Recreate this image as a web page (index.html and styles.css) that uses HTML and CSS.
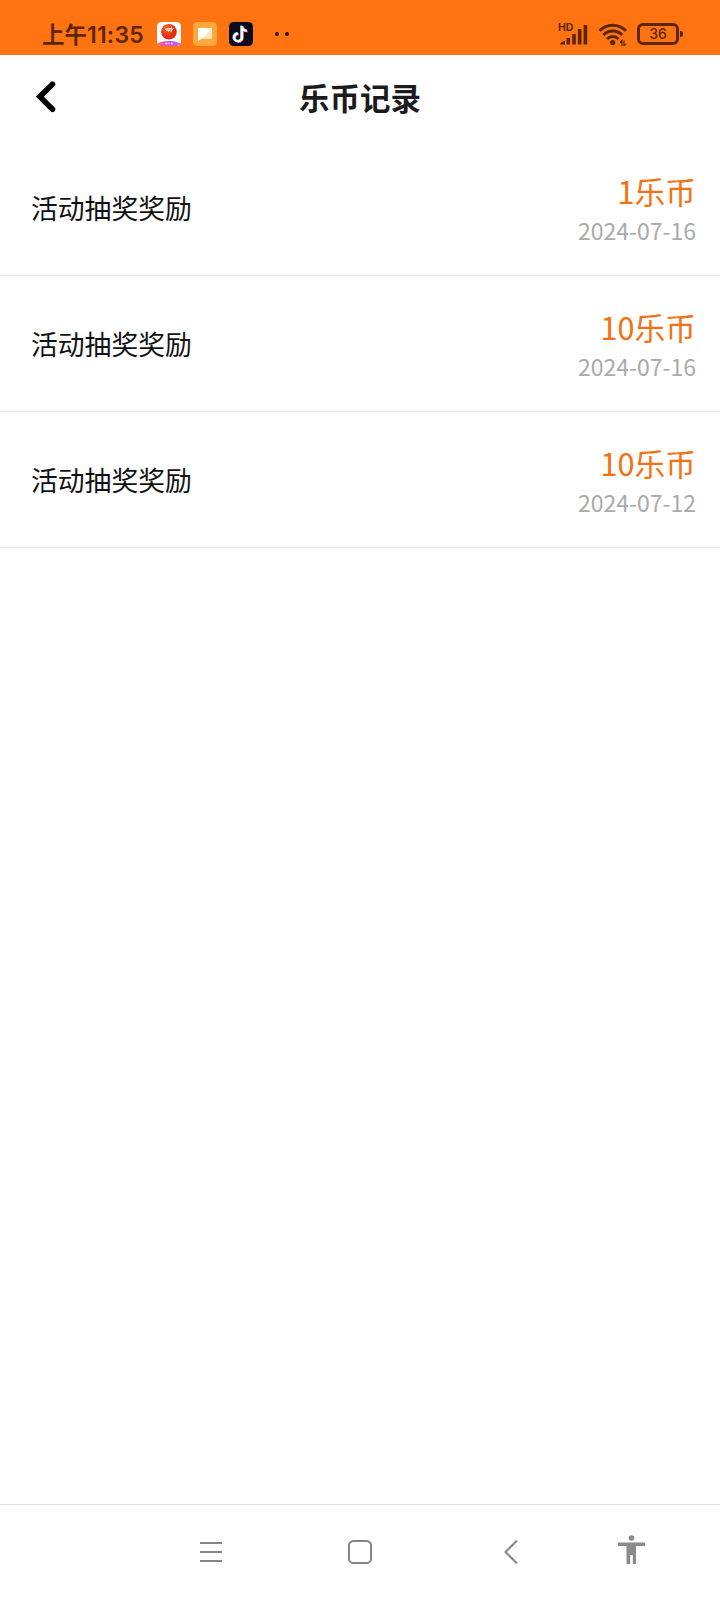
FILE: index.html
```
<!DOCTYPE html>
<html lang="zh-CN">

<head>
    <meta charset="UTF-8" />
    <meta name="viewport" content="width=device-width, initial-scale=1.0" />
    <title>乐币记录</title>
    <link rel="stylesheet" href="styles.css">
</head>

<body>
    <div class="status-bar">
        <div class="status-left">
            <span class="time">上午<span class="clock">11:35</span></span>
            <svg class="app-icon" width="24" height="24" viewBox="0 0 24 24">
                <defs>
                    <clipPath id="appClip"><rect width="24" height="24" rx="4.5" /></clipPath>
                    <linearGradient id="appBand"><stop offset="0" stop-color="#ff6a5a" /><stop offset=".45" stop-color="#d44de0" /><stop offset="1" stop-color="#c66cf2" /></linearGradient>
                    <radialGradient id="appBall" cx=".4" cy=".3"><stop offset="0" stop-color="#ff6a20" /><stop offset="1" stop-color="#e62c10" /></radialGradient>
                </defs>
                <g clip-path="url(#appClip)">
                    <rect width="24" height="24" fill="#fff" />
                    <ellipse cx="12" cy="24" rx="13" ry="5" fill="url(#appBand)" />
                    <path d="M8.500 21.500h2M11.500 21.500h1M14 21.500h1.500" stroke="#fff" stroke-width="1.500" />
                    <circle cx="12" cy="9.800" r="7.800" fill="url(#appBall)" />
                    <path d="M8 7.500l2.500-1-1 2.500 3-3-1 3.500 3-4-.5 4 2.500-3.500" fill="none" stroke="#fff" stroke-width=".9" />
                </g>
            </svg>
            <svg class="app-icon" width="24" height="24" viewBox="0 0 24 24">
                <rect width="24" height="24" rx="4.500" fill="#ffa83e" />
                <path d="M5 6h14v10.500H9L5 19z" fill="#fff" />
                <path d="M19 6v10.500H9z" fill="#ffe7c6" />
            </svg>
            <svg class="app-icon" width="24" height="24" viewBox="0 0 24 24">
                <rect width="24" height="24" rx="4.500" fill="#0b0b1a" />
                <g fill="none" stroke-width="2.400">
                    <path d="M12.300 3.500v11.500a3.900 3.900 0 1 1-3.900-3.900M12.300 3.500c.3 3.200 2.200 4.700 5 4.900" stroke="#35e5e5" />
                    <path d="M13.700 4.500v11.500a3.900 3.900 0 1 1-3.900-3.900M13.700 4.500c.3 3.200 2.200 4.700 5 4.900" stroke="#f5305c" />
                    <path d="M13 4v11.500a3.900 3.900 0 1 1-3.900-3.900M13 4c.3 3.200 2.200 4.700 5 4.900" stroke="#fff" />
                </g>
            </svg>
            <span class="dots"><i></i><i></i></span>
        </div>
        <div class="status-right">
            <span class="signal">
                <span class="hd">HD</span>
                <svg width="29" height="22" viewBox="0 0 29 22">
                    <g stroke="#5c2600" stroke-width="3.600">
                        <path d="M9.300 21.500v-6.500M15 21.500v-10.500M20.700 21.500V6M26.400 21.500V2" />
                    </g>
                    <path d="M1 21.500c0-1.500 3-3.500 5-3.500v3.500z" fill="#5c2600" />
                </svg>
            </span>
            <svg class="wifi" width="30" height="23" viewBox="0 0 30 23">
                <g fill="none" stroke="#5c2600" stroke-width="2.900">
                    <path d="M1.500 7.800a18.500 18.500 0 0 1 26.500 0" />
                    <path d="M5.300 12a13.200 13.200 0 0 1 18.900 0" />
                    <path d="M9 16a8 8 0 0 1 11.500 0" />
                </g>
                <circle cx="14.700" cy="19.500" r="2.600" fill="#5c2600" />
                <path d="M24 23v-5.500l-2 2M26 17.500V23l2-2" fill="none" stroke="#5c2600" stroke-width="1.200" />
            </svg>
            <span class="battery">36</span>
        </div>
    </div>

    <div class="header">
        <svg class="back" width="20" height="32" viewBox="0 0 20 32">
            <path d="M16.500 3.200L3.800 15.700l12.700 12.600" fill="none" stroke="#000" stroke-width="5.600" stroke-linecap="round" />
        </svg>
        <h1>乐币记录</h1>
    </div>

    <div class="list">
        <div class="item">
            <span class="name">活动抽奖奖励</span>
            <div class="info">
                <div class="amount">1乐币</div>
                <div class="date">2024-07-16</div>
            </div>
        </div>
        <div class="item">
            <span class="name">活动抽奖奖励</span>
            <div class="info">
                <div class="amount">10乐币</div>
                <div class="date">2024-07-16</div>
            </div>
        </div>
        <div class="item">
            <span class="name">活动抽奖奖励</span>
            <div class="info">
                <div class="amount">10乐币</div>
                <div class="date">2024-07-12</div>
            </div>
        </div>
    </div>

    <div class="nav-bar">
        <svg class="nav-menu" width="22" height="24" viewBox="0 0 22 24">
            <path d="M0 3h22M0 12h22M0 21h22" stroke="#858585" stroke-width="2" />
        </svg>
        <svg class="nav-home" width="24" height="24" viewBox="0 0 24 24">
            <rect x="1" y="1" width="22" height="22" rx="4.500" fill="none" stroke="#858585" stroke-width="2" />
        </svg>
        <svg class="nav-back" width="14" height="24" viewBox="0 0 14 24">
            <path d="M13 .5L1.500 12 13 23.500" fill="none" stroke="#858585" stroke-width="2" />
        </svg>
        <svg class="nav-person" width="27" height="29" viewBox="0 0 27 29">
            <circle cx="13.500" cy="3" r="2.800" fill="#8a8a8a" />
            <path d="M0 7.500h27v3.500h-9v18h-3.200v-9h-2.600v9H8.500V11H0z" fill="#8a8a8a" />
        </svg>
    </div>
</body>

</html>
```
FILE: styles.css
```
* {
    box-sizing: border-box;
}

body {
    margin: 0;
    height: 1600px;
    display: flex;
    flex-direction: column;
    background-color: #fff;
    font-family: "Noto Sans CJK SC", sans-serif;
}

svg {
    display: block;
    flex-shrink: 0;
}

.status-bar {
    height: 55px;
    padding: 13px 36px 0 42px;
    display: flex;
    justify-content: space-between;
    background-color: #ff7410;
    color: #5c2600;
}

.status-left,
.status-right {
    display: flex;
    align-items: center;
    height: 42px;
}

.time {
    width: 115px;
    font-size: 22.5px;
    font-weight: 600;
    line-height: 42px;
    white-space: nowrap;
}

.clock {
    font-family: Inter, sans-serif;
    font-size: 23px;
    font-weight: 600;
    letter-spacing: 0.2px;
}

.app-icon {
    margin-right: 12px;
}

.dots {
    display: flex;
    gap: 6px;
    margin-left: 10px;
}

.dots i {
    width: 4px;
    height: 4px;
    border-radius: 50%;
    background-color: #2c1000;
}

.signal {
    position: relative;
    margin-right: 10px;
}

.hd {
    position: absolute;
    top: 0;
    left: -1px;
    font-family: Inter, sans-serif;
    font-size: 10.5px;
    font-weight: 700;
    line-height: 9px;
}

.wifi {
    margin-right: 9px;
}

.battery {
    position: relative;
    width: 42px;
    height: 22px;
    margin-right: 5px;
    border: 3px solid #5c2600;
    border-radius: 6px;
    font-family: Inter, sans-serif;
    font-size: 14px;
    font-weight: 500;
    line-height: 16px;
    text-align: center;
}

.battery::after {
    content: "";
    position: absolute;
    top: 5px;
    right: -7px;
    width: 3px;
    height: 6px;
    border-radius: 0 2px 2px 0;
    background-color: #5c2600;
}

.header {
    height: 85px;
    padding: 0 36px 2px;
    display: grid;
    grid-template-columns: 20px 1fr 20px;
    align-items: center;
}

.header h1 {
    margin: 0;
    color: #1b1b1d;
    font-size: 30.5px;
    font-weight: 600;
    line-height: 44px;
    text-align: center;
}

.item {
    height: 136px;
    padding: 0 24px 0 31px;
    display: flex;
    justify-content: space-between;
    align-items: center;
    border-bottom: 1px solid #e3e3e3;
}

.name {
    color: #111;
    font-size: 26.8px;
    line-height: 40px;
}

.info {
    text-align: right;
}

.amount {
    color: #f5700f;
    font-size: 30.7px;
    line-height: 44px;
}

.date {
    color: #aaa;
    font-size: 23px;
    line-height: 34px;
}

.nav-bar {
    height: 96px;
    margin-top: auto;
    padding: 0 75px 2px 200px;
    display: flex;
    align-items: center;
    border-top: 1px solid #e0e0e0;
}

.nav-home {
    margin-left: 126px;
}

.nav-back {
    margin-left: 132px;
}

.nav-person {
    margin: -4px 0 0 100px;
}
```
